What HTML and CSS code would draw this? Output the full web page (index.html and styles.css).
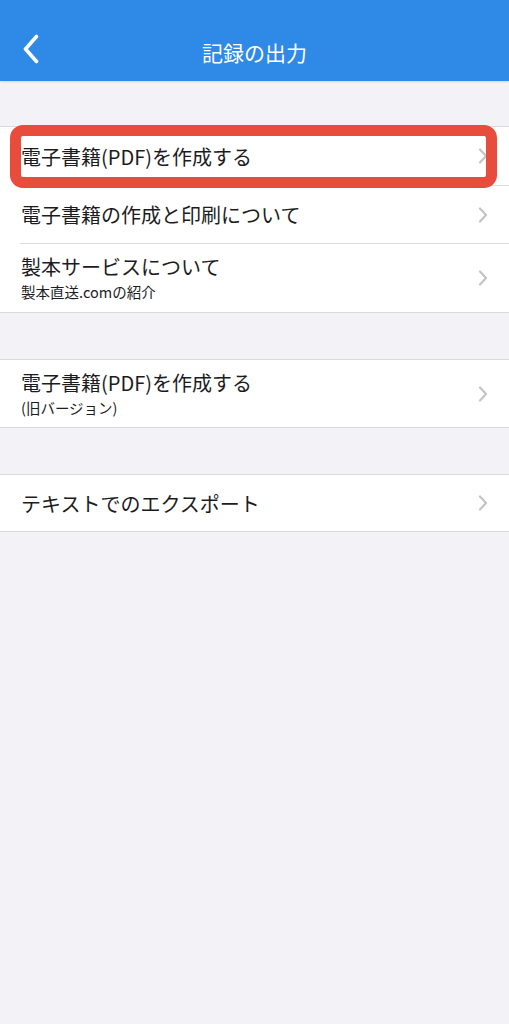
FILE: index.html
```html
<!DOCTYPE html>
<html lang="ja">
<head>
    <meta charset="UTF-8">
    <meta name="viewport" content="width=device-width, initial-scale=1.0">
    <title>記録の出力</title>
    <link rel="stylesheet" href="styles.css">
</head>
<body>
    <header class="navbar">
        <svg class="back" width="16" height="30" viewBox="0 0 16 30">
            <path d="M13.5 2.5 L2.5 15 L13.5 27.5" fill="none" stroke="#fff" stroke-width="3.6" stroke-linecap="round" stroke-linejoin="round"/>
        </svg>
        <h1 class="title">記録の出力</h1>
    </header>

    <main class="content">
        <ul class="group">
            <li class="row row-first">
                <div class="label">電子書籍(PDF)を作成する</div>
                <svg class="chev" width="10" height="16" viewBox="0 0 10 16"><path d="M2 1.5 L8 8 L2 14.5" fill="none" stroke="#c4c4c8" stroke-width="2.2" stroke-linecap="round" stroke-linejoin="round"/></svg>
                <div class="highlight"></div>
            </li>
            <li class="row">
                <div class="label">電子書籍の作成と印刷について</div>
                <svg class="chev" width="10" height="16" viewBox="0 0 10 16"><path d="M2 1.5 L8 8 L2 14.5" fill="none" stroke="#c4c4c8" stroke-width="2.2" stroke-linecap="round" stroke-linejoin="round"/></svg>
            </li>
            <li class="row row-tall">
                <div class="label"><span>製本サービスについて</span><span class="sub">製本直送.comの紹介</span></div>
                <svg class="chev" width="10" height="16" viewBox="0 0 10 16"><path d="M2 1.5 L8 8 L2 14.5" fill="none" stroke="#c4c4c8" stroke-width="2.2" stroke-linecap="round" stroke-linejoin="round"/></svg>
            </li>
        </ul>

        <ul class="group">
            <li class="row row-tall row-old">
                <div class="label"><span>電子書籍(PDF)を作成する</span><span class="sub">(旧バージョン)</span></div>
                <svg class="chev" width="10" height="16" viewBox="0 0 10 16"><path d="M2 1.5 L8 8 L2 14.5" fill="none" stroke="#c4c4c8" stroke-width="2.2" stroke-linecap="round" stroke-linejoin="round"/></svg>
            </li>
        </ul>

        <ul class="group">
            <li class="row row-export">
                <div class="label">テキストでのエクスポート</div>
                <svg class="chev" width="10" height="16" viewBox="0 0 10 16"><path d="M2 1.5 L8 8 L2 14.5" fill="none" stroke="#c4c4c8" stroke-width="2.2" stroke-linecap="round" stroke-linejoin="round"/></svg>
            </li>
        </ul>
    </main>
</body>
</html>
```

FILE: styles.css
```css
body {
    margin: 0;
    background-color: #f2f2f7;
    font-family: "Noto Sans CJK JP", "Noto Sans", sans-serif;
    color: #1c1c1e;
}

.navbar {
    height: 81px;
    background-color: #2f89e6;
    display: flex;
    align-items: center;
    justify-content: center;
    position: relative;
    box-shadow: 0 1px 2px rgba(0, 0, 0, 0.12);
}

.back {
    position: absolute;
    left: 23px;
    top: 34px;
}

.title {
    margin: 0;
    padding-top: 22px;
    font-size: 21px;
    font-weight: 400;
    color: #fff;
}

.content {
    padding-top: 45px;
}

.group {
    list-style: none;
    margin: 0 0 46px 0;
    padding: 0 0 0 20px;
    background-color: #fff;
    border-top: 1px solid #d9d9de;
    border-bottom: 1px solid #d9d9de;
}

.row {
    height: 57px;
    display: flex;
    align-items: center;
    padding-right: 21px;
    border-bottom: 1px solid #dcdce0;
    position: relative;
}

.row:last-child {
    border-bottom: none;
}

.row-first {
    height: 58px;
}

.row-tall {
    height: 68px;
}

.row-old {
    height: 67px;
}

.row-export {
    height: 56px;
}

.label {
    flex: 1;
    padding-left: 1px;
    font-size: 20px;
    line-height: 29px;
    display: flex;
    flex-direction: column;
}

.row-tall .label {
    padding-bottom: 2px;
}

.sub {
    font-size: 14.5px;
    line-height: 21px;
    color: #1c1c1e;
}

.highlight {
    position: absolute;
    left: -10px;
    right: 12px;
    top: -2px;
    bottom: -3px;
    border: 11px solid #e84c3d;
    border-radius: 13px;
    pointer-events: none;
}
```
